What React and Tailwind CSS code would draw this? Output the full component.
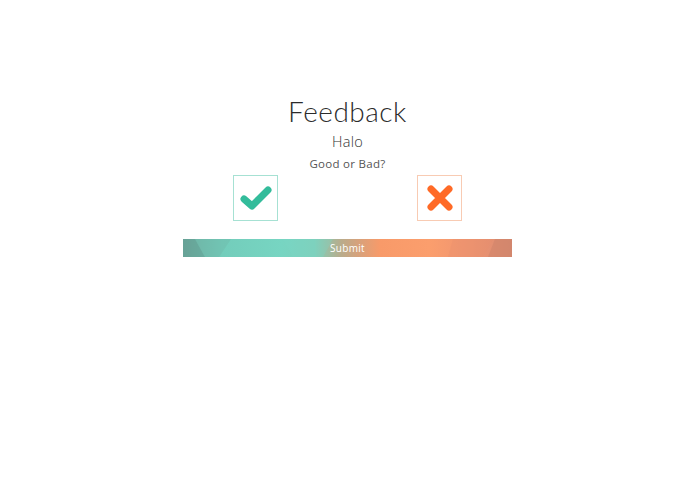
import React from "react";

export default function App() {
  return (
    <div className="w-[695px] h-[494px] bg-white flex flex-col items-center font-['Lato','Open_Sans',sans-serif] text-[#333]">
      <h1 className="mt-[93px] text-[28px] leading-[36px] font-light tracking-[0.5px] text-[#2b2b2b]">Feedback</h1>
      <div className="mt-[3px] font-['Open_Sans',sans-serif] text-[14.5px] leading-[20px] font-light tracking-[0.3px] text-[#333]">Halo</div>
      <div className="mt-[4px] font-['Open_Sans',sans-serif] text-[11.5px] leading-[16px] text-[#555] tracking-[0.3px]">Good or Bad?</div>
      <div className="mt-[3px] w-[229px] flex justify-between">
        <button className="w-[45px] h-[46px] border border-[#a6e1d3] flex items-center justify-center bg-white">
          <svg width="34" height="28" viewBox="0 0 34 28">
            <path d="M5 15 L13 22 L29 6" fill="none" stroke="#33bc9b" strokeWidth="7" strokeLinecap="round" strokeLinejoin="round" />
          </svg>
        </button>
        <button className="w-[45px] h-[46px] border border-[#f8cbb3] flex items-center justify-center bg-white">
          <svg width="28" height="28" viewBox="0 0 28 28">
            <path d="M5 5 L23 23 M23 5 L5 23" fill="none" stroke="#ff6a26" strokeWidth="7" strokeLinecap="round" />
          </svg>
        </button>
      </div>
      <button className="relative mt-[18px] w-[329px] h-[18px] overflow-hidden bg-[linear-gradient(90deg,#6ea99d_0%,#73cdbb_12%,#77d5c2_30%,#7fcfba_40%,#b9ac8c_48%,#d5a27c_53%,#f89a69_60%,#fb9e6d_75%,#ee9471_88%,#d98b72_100%)] flex items-center justify-center">
        <svg className="absolute inset-0" width="329" height="18" viewBox="0 0 329 18" preserveAspectRatio="none">
          <polygon points="0,0 12,0 22,18 0,18" fill="#5f9a8f" opacity="0.45" />
          <polygon points="12,0 48,0 36,18 22,18" fill="#6fbcab" opacity="0.5" />
          <polygon points="100,0 150,0 140,18 110,18" fill="#7cd8c6" opacity="0.3" />
          <polygon points="270,0 310,0 300,18 265,18" fill="#e88f6c" opacity="0.35" />
          <polygon points="312,0 329,0 329,18 305,18" fill="#c98069" opacity="0.45" />
        </svg>
        <span className="relative font-['Open_Sans',sans-serif] text-[10px] leading-[12px] text-white tracking-[0.3px]">Submit</span>
      </button>
    </div>
  );
}
